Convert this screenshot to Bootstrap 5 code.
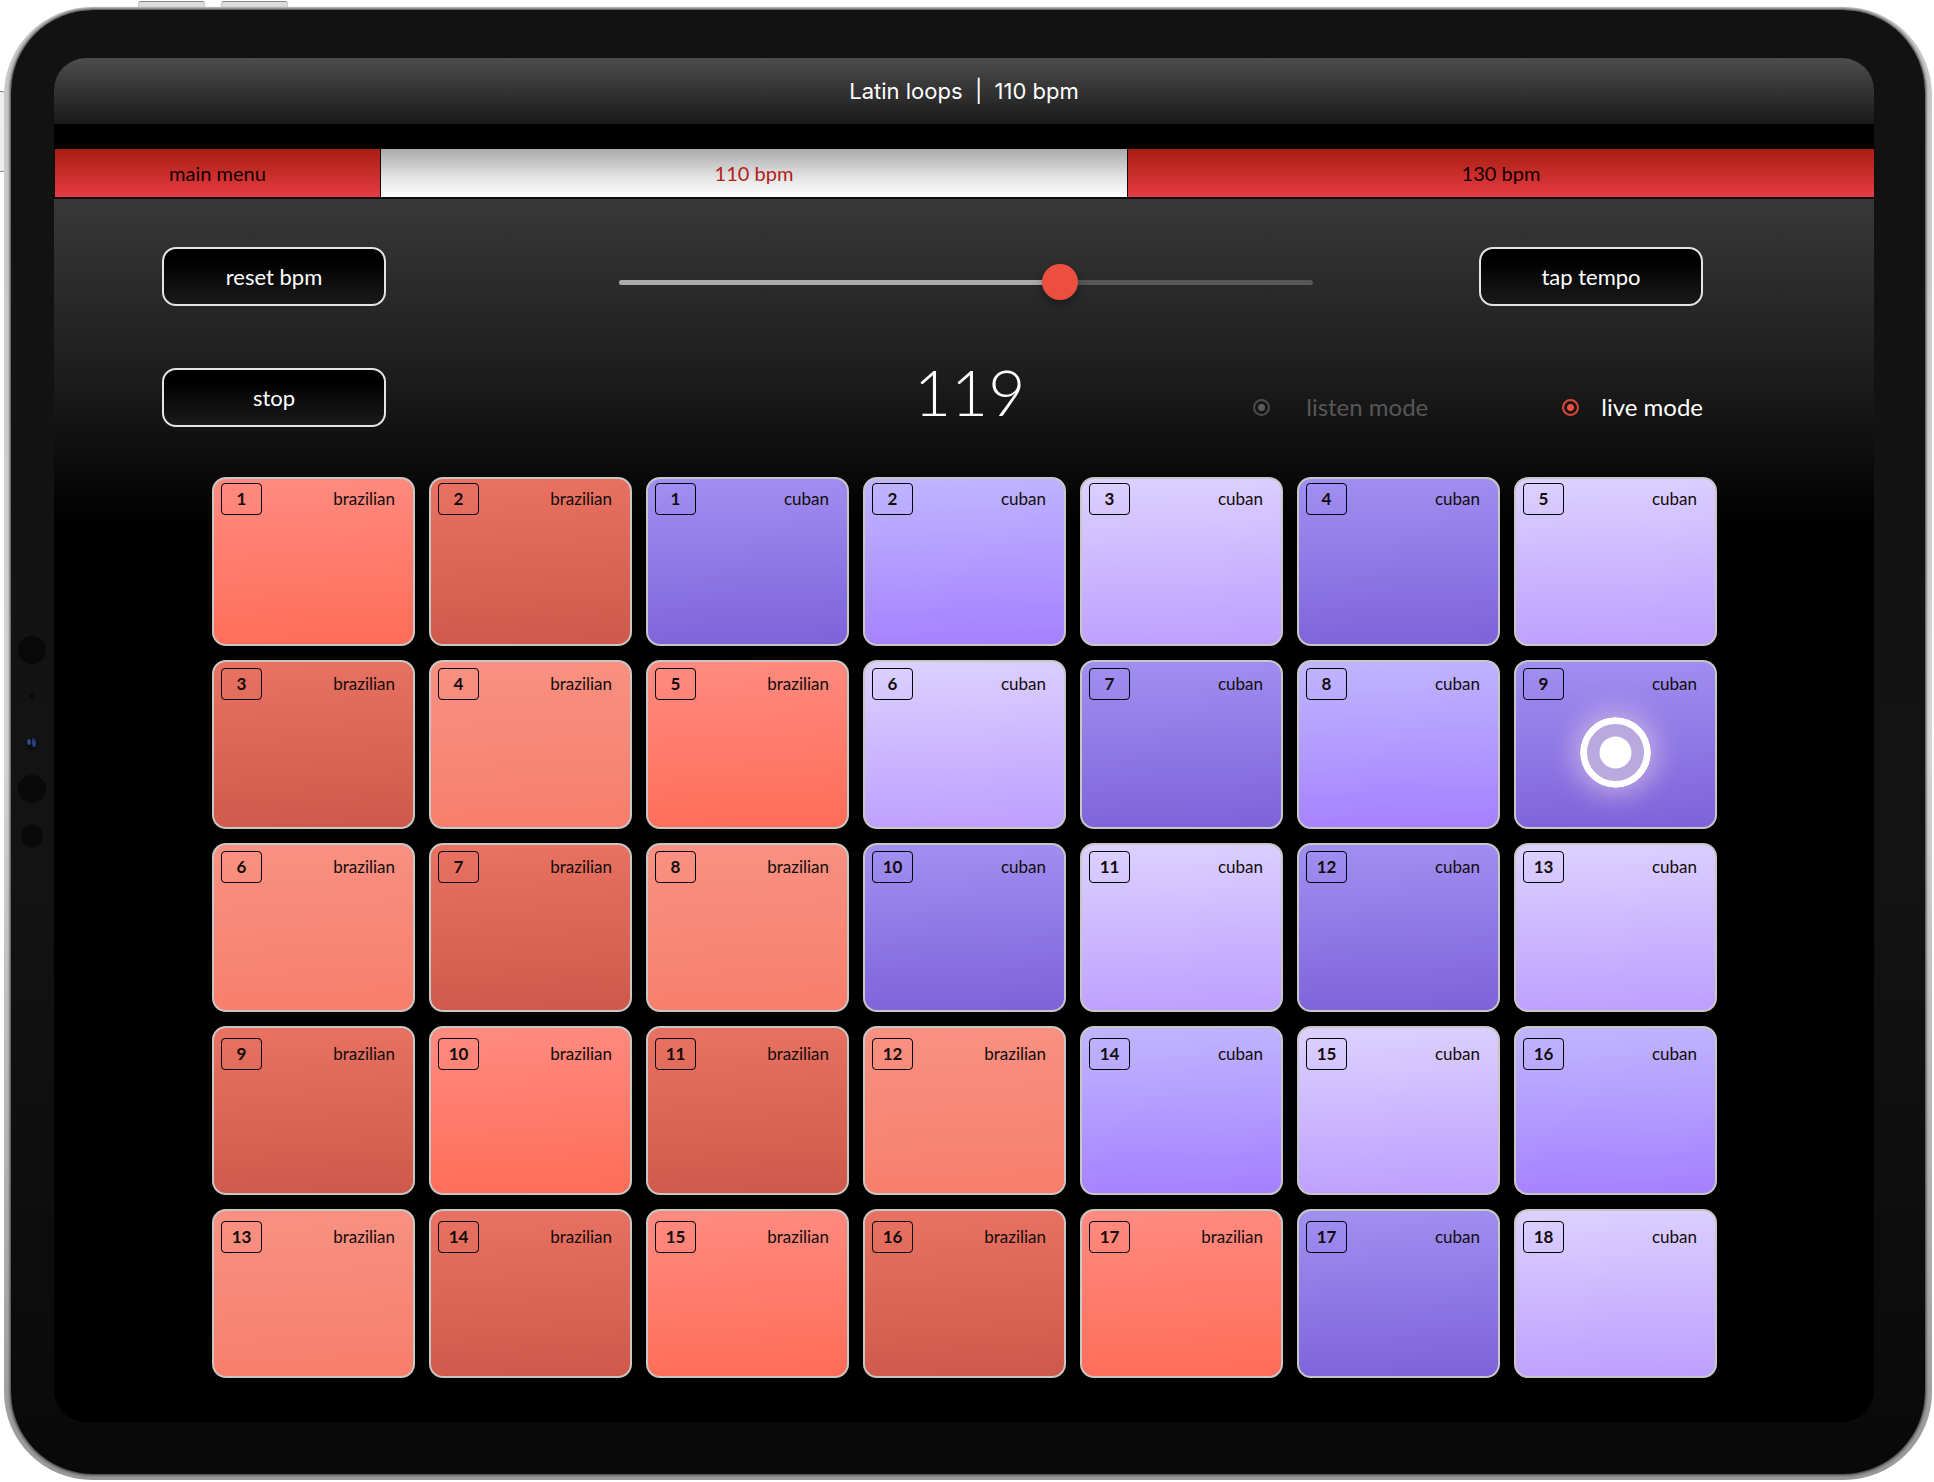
<!DOCTYPE html>
<html lang="en">
<head>
<meta charset="utf-8">
<meta name="viewport" content="width=device-width, initial-scale=1">
<title>Latin loops | 110 bpm</title>
<link href="https://cdn.jsdelivr.net/npm/bootstrap@5.3.0/dist/css/bootstrap.min.css" rel="stylesheet">
<style>
  body { background: #fff; font-family: Lato, "Open Sans", sans-serif; }
  .tablet { min-height: 100vh; padding: 7px 2px 1px 4px; }
  .tablet-metal {
    padding: 3px 7px 6px; border-radius: 88px;
    background: linear-gradient(#c4c7c6, #d4d6d5 50%, #999);
  }
  .tablet-bezel {
    padding: 48px 51px 52px 43px; border-radius: 82px;
    background: linear-gradient(#121212, #131313 60%, #090909);
    box-shadow: 0 0 3px 1px #333;
  }
  .side-key { background: #dcdedd; border: 1px solid #c5c8c7; border-top-color: #888; border-radius: 3px; }
  .key-top { top: 1px; width: 67px; height: 8px; }
  .key-one { left: 138px; }
  .key-two { left: 221px; }
  .key-left { left: -3px; top: 91px; width: 8px; height: 81px; background: #eee; border-bottom-color: #888; }
  .sensors { left: 11px; top: 623px; }

  .app-screen { background: #000; border-radius: 32px; overflow: hidden; }
  .title-bar {
    height: 66px; background: linear-gradient(#4d4d4d, #191919);
    font-family: Inter, sans-serif; font-size: 22px; line-height: 28px;
  }
  .tempo-tabs {
    display: grid; grid-template-columns: 325px 1fr 1fr; gap: 1px;
    margin-top: 25px; padding: 0 0 2px 1px; background: #0d0d0d;
  }
  .tempo-tabs button {
    height: 48px; border: 0; padding: 0; color: #110000; font-size: 20px; line-height: 24px;
    background: linear-gradient(#a81d13, #cd302e 60%, #e63c46);
  }
  .tempo-tabs button.active { color: #b3201c; background: linear-gradient(#aaa, #e4e4e4 60%, #fff); }

  .deck { padding: 48px 0 44px; background: linear-gradient(#383838, #1c1c1c 180px, #000 325px); }
  .deck-controls { padding: 0 171px 0 108px; }
  .deck-controls + .deck-controls { margin-top: 62px; }
  .pill-btn {
    width: 224px; height: 59px; border: 2px solid #e4e4e4; border-radius: 14px; color: #fff;
    font-size: 22px; line-height: 28px; background: linear-gradient(#000 20%, #1a1a1a);
  }
  .slider-cell { padding: 17px 166px 0 233px; }
  .tempo-range {
    appearance: none; -webkit-appearance: none; width: 100%; height: 36px; margin: 0; background: none; display: block;
  }
  .tempo-range::-webkit-slider-runnable-track {
    height: 5px; border-radius: 3px;
    background: linear-gradient(90deg, #acaaab 64%, #575757 64%);
  }
  .tempo-range::-webkit-slider-thumb {
    -webkit-appearance: none; width: 36px; height: 36px; margin-top: -16px; border: 0;
    border-radius: 50%; background: #ec4e3f; box-shadow: 0 4px 10px rgba(0,0,0,.35);
  }
  .readout { padding-left: 300px; font-size: 64px; line-height: 48px; font-weight: 300; color: #fff; }
  .mode-pick { font-size: 24px; line-height: 30px; color: #575757; }
  .mode-pick.on { color: #fff; }
  .mode-pick input {
    appearance: none; -webkit-appearance: none; width: 17px; height: 17px; margin: 0; border-radius: 50%;
    border: 2px solid #4c4c4c; background: radial-gradient(circle, #5c5c5c 3px, transparent 4px);
  }
  .mode-pick.on input { border-color: #dd4939; background: radial-gradient(circle, #f25240 3px, transparent 4px); }
  .mode-listen { gap: 36px; margin-right: 134px; }
  .mode-live { gap: 22px; }

  .pad-grid { display: grid; grid-template-columns: repeat(7, 1fr); gap: 14px; padding: 50px 157px 0 158px; }
  .pad-cell {
    height: 169px; padding: 4px 18px 0 7px; border: 2px solid #c9c7c6; border-radius: 14px;
    color: #120c0c; font-size: 17px; line-height: 24px; text-align: left;
  }
  .pad-cell.mid { padding-top: 6px; }
  .pad-cell.low { padding-top: 10px; }
  .pad-no { width: 41px; height: 32px; border: 1px solid #000; border-radius: 4px; font-weight: 700; }
  .coral    { background: linear-gradient(177deg, #ff8b80, #ff6c58); }
  .brick    { background: linear-gradient(177deg, #e97262, #ce594a); }
  .salmon   { background: linear-gradient(177deg, #f99182, #f77e6b); }
  .indigo   { background: linear-gradient(177deg, #a190f1, #7d62d9); }
  .violet   { background: linear-gradient(177deg, #c0b6ff, #a480ff); }
  .lavender { background: linear-gradient(177deg, #dcd1ff, #bd9fff); }
  .touch { left: 64px; top: 55px; border-radius: 50%; box-shadow: 0 0 26px 7px rgba(214,190,230,.7); }
</style>
</head>
<body>
<div class="tablet position-relative overflow-hidden">
  <span class="side-key key-top key-one position-absolute"></span>
  <span class="side-key key-top key-two position-absolute"></span>
  <span class="side-key key-left position-absolute"></span>
  <div class="tablet-metal position-relative">
    <div class="tablet-bezel">
      <main class="app-screen">
        <header class="title-bar d-flex align-items-center justify-content-center text-white">Latin loops&nbsp; |&nbsp; 110 bpm</header>
        <nav class="tempo-tabs" aria-label="Tempo">
          <button type="button">main menu</button>
          <button type="button" class="active">110 bpm</button>
          <button type="button">130 bpm</button>
        </nav>
        <section class="deck">
          <div class="deck-controls d-flex align-items-start">
            <button type="button" class="pill-btn flex-shrink-0">reset bpm</button>
            <div class="slider-cell flex-grow-1">
              <input type="range" class="tempo-range" min="0" max="185" value="119" aria-label="Tempo">
            </div>
            <button type="button" class="pill-btn flex-shrink-0">tap tempo</button>
          </div>
          <div class="deck-controls d-flex align-items-start">
            <button type="button" class="pill-btn flex-shrink-0">stop</button>
            <output class="readout flex-grow-1 text-center">119</output>
            <div class="d-flex pt-4">
              <label class="mode-pick mode-listen d-flex align-items-center"><input type="radio" name="mode">listen mode</label>
              <label class="mode-pick mode-live on d-flex align-items-center"><input type="radio" name="mode" checked>live mode</label>
            </div>
          </div>
          <div class="pad-grid" id="pads"></div>
        </section>
      </main>
    </div>
    <svg class="sensors position-absolute" width="34" height="226" viewBox="0 0 34 226" aria-hidden="true">
      <circle cx="17" cy="20" r="14" fill="#090909"/>
      <circle cx="17" cy="66" r="3" fill="#090909"/>
      <circle cx="17" cy="114" r="6" fill="#0c0d10"/>
      <ellipse cx="14" cy="112" rx="2" ry="3" fill="#2a4a86"/>
      <ellipse cx="19" cy="113" rx="2" ry="4" fill="#26407a"/>
      <ellipse cx="18" cy="110" rx="1" ry="2" fill="#3a2a7a"/>
      <circle cx="17" cy="159" r="14" fill="#090909"/>
      <circle cx="17" cy="206" r="11" fill="#090909"/>
    </svg>
  </div>
</div>
<script src="https://cdn.jsdelivr.net/npm/bootstrap@5.3.0/dist/js/bootstrap.bundle.min.js"></script>
<script>
  const tones = { A: 'coral', B: 'brick', C: 'salmon', D: 'indigo', E: 'violet', F: 'lavender' };
  const rows = [
    'A1 B2 D1 E2 F3 D4 F5',
    'B3 C4 A5 F6 D7 E8 D9*',
    'C6 B7 C8 D10 F11 D12 F13',
    'B9 A10 B11 C12 E14 F15 E16',
    'C13 B14 A15 B16 A17 D17 F18'
  ];
  const insets = ['', 'mid', 'mid', 'low', 'low'];
  const touch = '<svg class="touch position-absolute" width="71" height="71" viewBox="0 0 71 71" aria-hidden="true">' +
    '<circle cx="35.5" cy="35.5" r="32" fill="#baa9df" stroke="#fff" stroke-width="7"/>' +
    '<circle cx="35.5" cy="35.5" r="16" fill="#fff"/></svg>';
  document.getElementById('pads').innerHTML = rows.map((row, r) => row.split(' ').map(code => {
    const style = 'ABC'.includes(code[0]) ? 'brazilian' : 'cuban';
    return '<button type="button" class="pad-cell position-relative d-flex align-items-start justify-content-between ' +
      tones[code[0]] + ' ' + insets[r] + '"><span class="pad-no d-flex align-items-center justify-content-center">' +
      parseInt(code.slice(1)) + '</span><span class="pt-1">' + style + '</span>' + (code.endsWith('*') ? touch : '') + '</button>';
  }).join('')).join('');
</script>
</body>
</html>
